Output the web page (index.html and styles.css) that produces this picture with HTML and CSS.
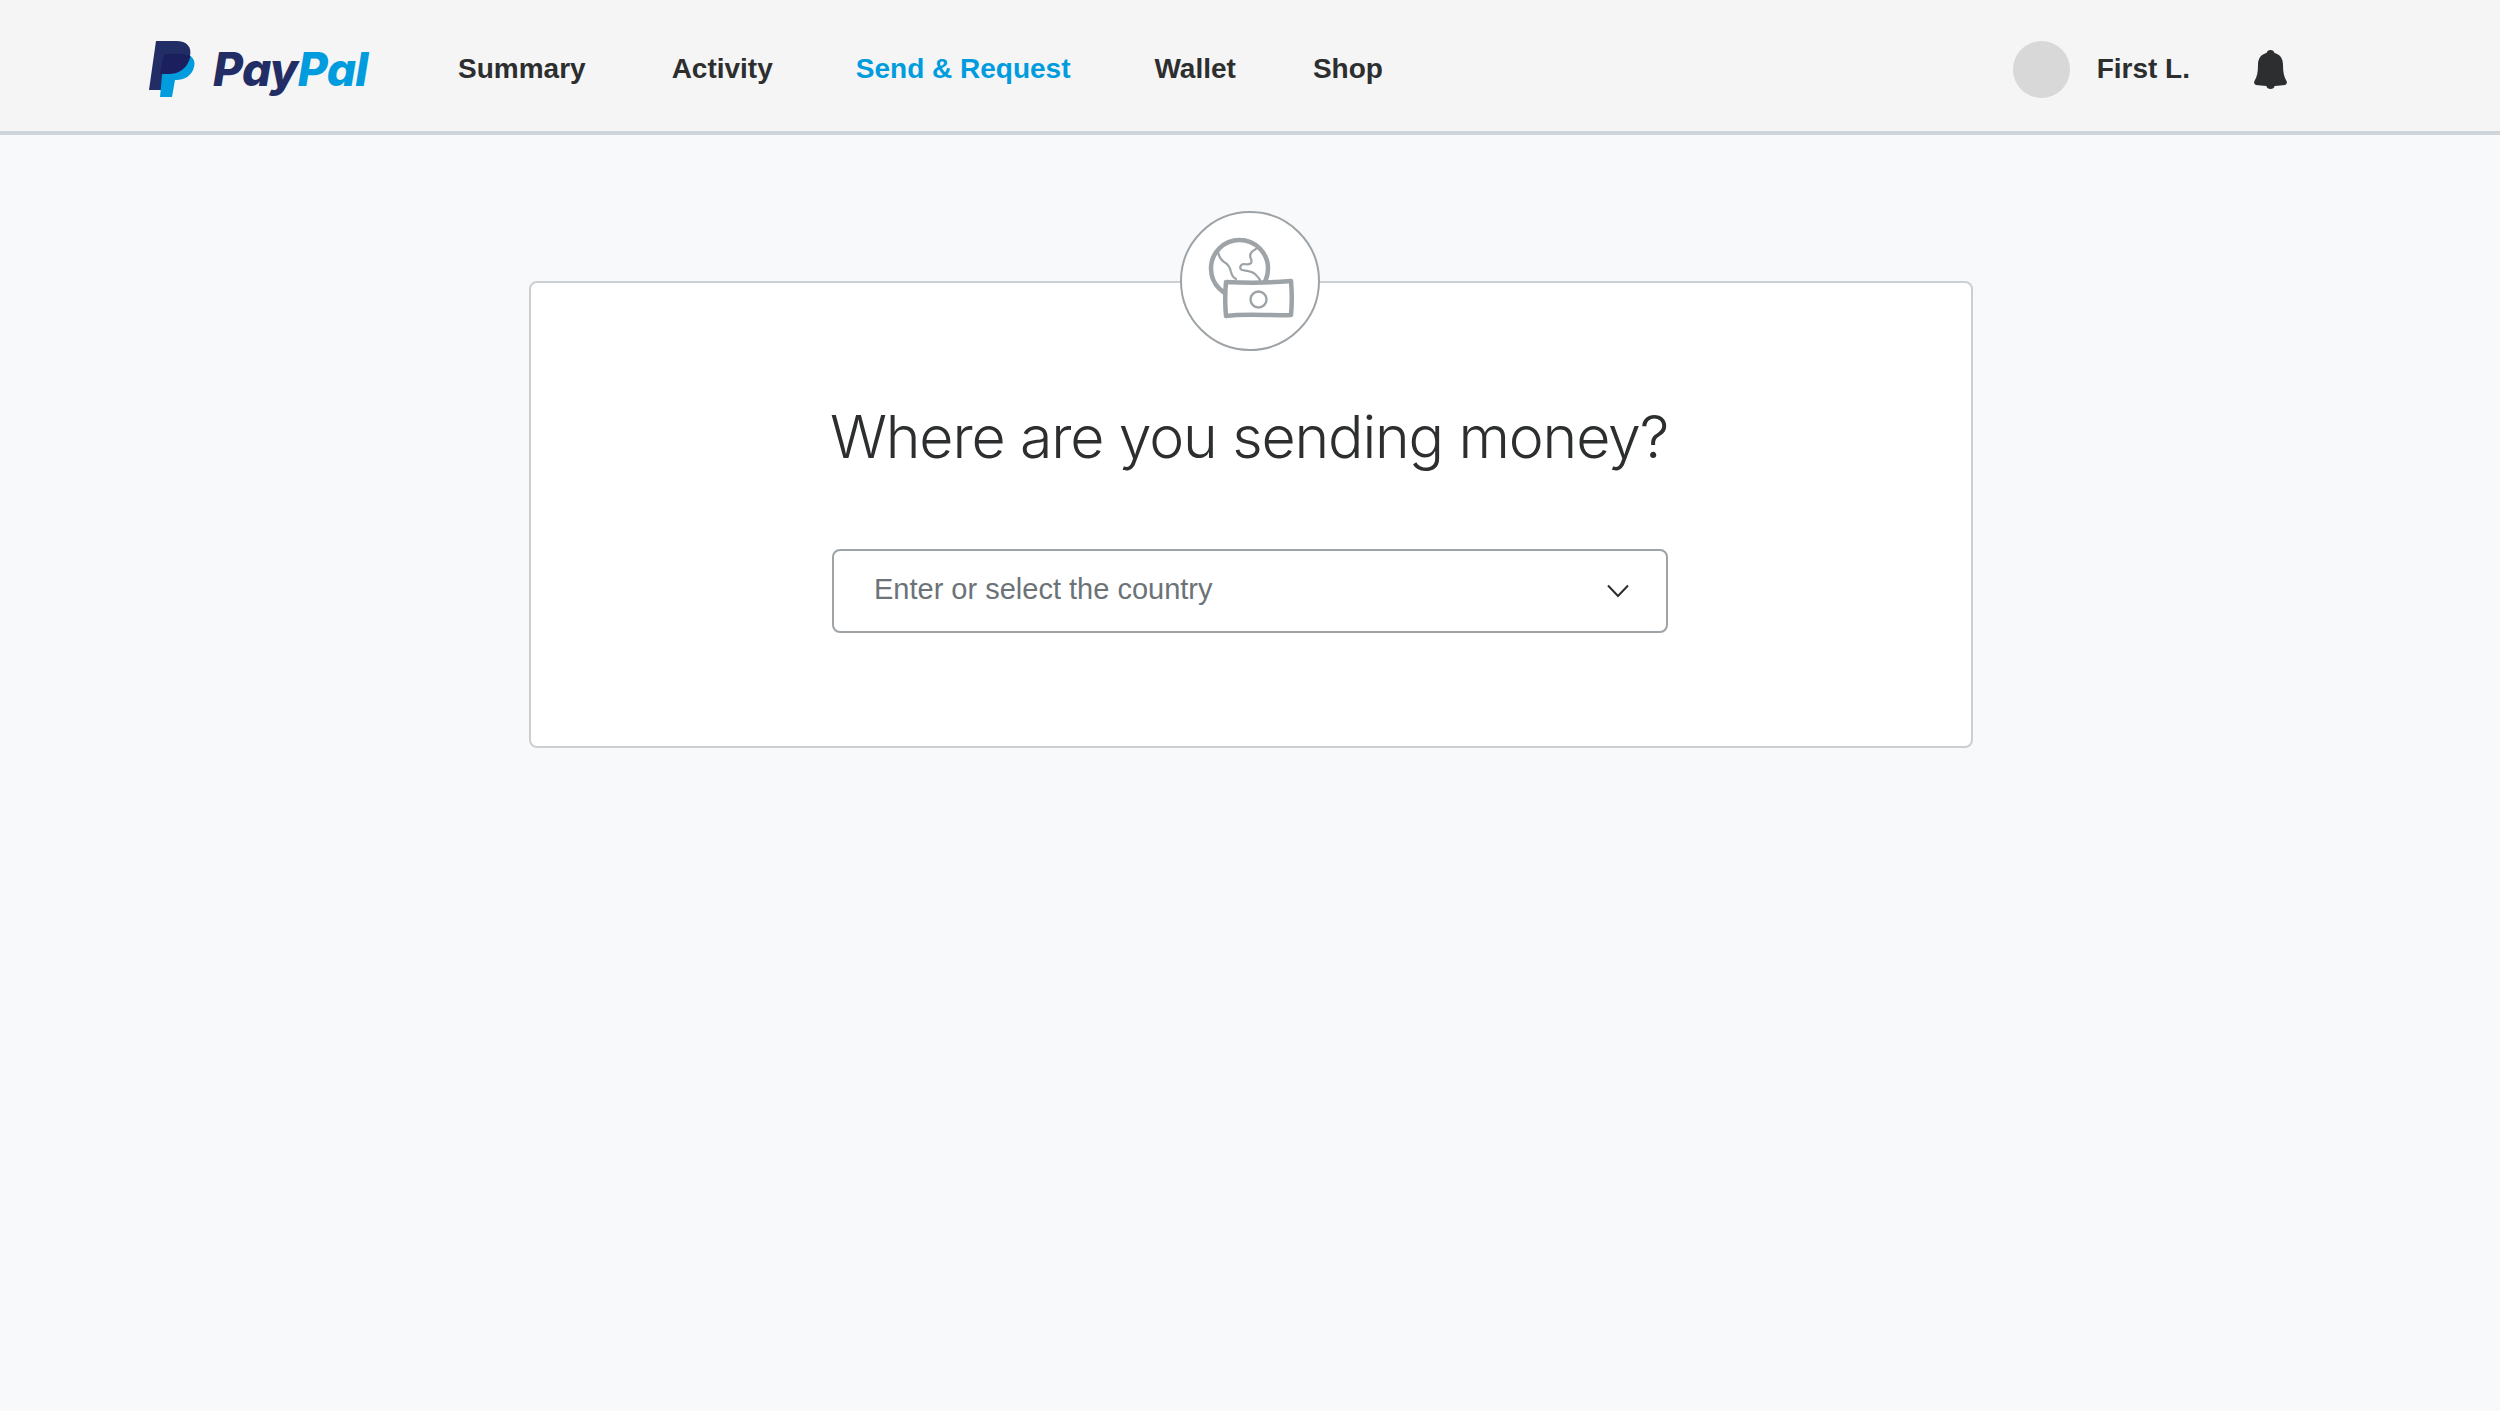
FILE: index.html
```html
<!DOCTYPE html>
<html lang="en">
<head>
	<meta charset="UTF-8">
	<title>PayPal - Send money</title>
	<link rel="stylesheet" href="styles.css">
</head>
<body>
	<header class="topbar">
		<a class="logo" href="#">
			<svg class="logo-mark" width="46" height="56" viewBox="0 0 46 56">
				<path fill="#222d65" d="M7 0H27C38 0 43 6 41 15C39 27 30 33 20 33H15L12 49H0Z"/>
				<path fill="#009cde" d="M15 13H33C43 13 47 19 45 26C43 35 35 39 27 39H26L23 56H11Z"/>
				<path fill="#1b1f5e" d="M15 13H33C37 13 40 13.500 41.500 15C39 27 30 33 20 33H11Z"/>
			</svg>
			<span class="logo-word"><span class="pay">Pay</span><span class="pal">Pal</span></span>
		</a>
		<nav class="nav">
			<a class="nav-link nav-summary" href="#">Summary</a>
			<a class="nav-link nav-activity" href="#">Activity</a>
			<a class="nav-link nav-send active" href="#">Send &amp; Request</a>
			<a class="nav-link nav-wallet" href="#">Wallet</a>
			<a class="nav-link" href="#">Shop</a>
		</nav>
		<div class="user">
			<span class="avatar"></span>
			<span class="user-name">First L.</span>
			<svg class="bell" width="33" height="39" viewBox="0 0 33 39">
				<path fill="#2c2e2f" d="M16.500 0C18.500 0 20 1 20.500 3C26.500 4.500 29 9 29 15C29 22 30 27 32.500 31C33.500 33 32.500 34.500 31 35C21 36.500 12 36.500 2 35C.5 34.500 -.5 33 .5 31C3 27 4 22 4 15C4 9 6.500 4.500 12.500 3C13 1 14.500 0 16.500 0Z"/>
				<path fill="#2c2e2f" d="M12.500 36H20.500C20.500 38 18.500 39 16.500 39C14.500 39 12.500 38 12.500 36Z"/>
			</svg>
		</div>
	</header>

	<main class="page">
		<section class="card">
			<div class="card-icon">
				<svg width="140" height="140" viewBox="0 0 140 140" fill="none" stroke="#9da3a6" stroke-linecap="round" stroke-linejoin="round">
					<circle cx="59.500" cy="57.500" r="28.500" stroke-width="4.500"/>
					<path stroke-width="2.200" d="M38 41C39 46 41 49 44 51C48 53 50 56 51 61C52 65 54 67 56 68"/>
					<path stroke-width="2.200" d="M76 38C70 41 69 44 71 48C73 53 69 54 64 53C60 53 59 58 62 59C67 60 72 60 75 63C77 65 79 67 80 69"/>
					<path fill="#fff" stroke-width="4.500" d="M46 71C67 72 90 72 111 70C112 81 112 93 111 104C90 105 67 102 46 105C45 94 45 82 46 71Z"/>
					<circle cx="78.500" cy="88.500" r="8" stroke-width="2.400"/>
				</svg>
			</div>
			<h1 class="card-title">Where are you sending money?</h1>
			<div class="select">
				<span class="select-text">Enter or select the country</span>
				<svg class="chevron" width="22" height="14" viewBox="0 0 22 14" fill="none" stroke="#2c2e2f" stroke-width="2">
					<path d="M1 1.500L11 12L21 1.500"/>
				</svg>
			</div>
		</section>
	</main>
</body>
</html>
```

FILE: styles.css
```css
*{
	box-sizing: border-box;
}
html, body{
	height: 100%;
}
body{
	margin: 0;
	min-height: 1411px;
	background-color: #f8f9fb;
	color: #2c2e2f;
	font-family: "Liberation Sans", Arial, sans-serif;
}
a{
	text-decoration: none;
	color: inherit;
}

.topbar{
	display: flex;
	align-items: center;
	height: 135px;
	padding: 7px 213px 0 149px;
	background-color: #f5f5f5;
	border-bottom: 4px solid #cfd5d8;
}
.logo{
	display: flex;
	align-items: center;
	gap: 18px;
	width: 309px;
}
.logo-word{
	font-family: Inter, "Liberation Sans", sans-serif;
	font-size: 46px;
	font-weight: 800;
	font-style: italic;
	letter-spacing: -.6px;
	line-height: 1;
}
.pay{
	color: #222d65;
}
.pal{
	color: #009cde;
}

.nav{
	display: flex;
	align-items: center;
}
.nav-link{
	font-size: 28px;
	font-weight: 700;
	color: #2c2e2f;
	white-space: nowrap;
}
.nav-summary{
	margin-right: 86px;
}
.nav-activity{
	margin-right: 83px;
}
.nav-send{
	margin-right: 84px;
}
.nav-wallet{
	margin-right: 77px;
}
.active{
	color: #009cde;
}

.user{
	display: flex;
	align-items: center;
	margin-left: auto;
}
.avatar{
	width: 57px;
	height: 57px;
	border-radius: 50%;
	background-color: #d8d8d8;
}
.user-name{
	margin-left: 27px;
	font-size: 28px;
	font-weight: 700;
}
.bell{
	margin-left: 64px;
}

.page{
	display: flex;
	justify-content: center;
	padding: 146px 0 0 2px;
}
.card{
	position: relative;
	display: flex;
	flex-direction: column;
	align-items: center;
	width: 1444px;
	height: 467px;
	padding: 112px 2px 0 0;
	background-color: #fff;
	border: 2px solid #cccfd1;
	border-radius: 8px;
}
.card-icon{
	position: absolute;
	top: -72px;
	left: 50%;
	width: 140px;
	height: 140px;
	margin-left: -71px;
	background-color: #fff;
	border: 2px solid #9da3a6;
	border-radius: 50%;
}
.card-icon svg{
	display: block;
	margin: -2px;
}
.card-title{
	margin: 0;
	font-family: Inter, "Liberation Sans", sans-serif;
	font-size: 59px;
	font-weight: 300;
	letter-spacing: -1.15px;
	line-height: 84px;
	color: #2c2e2f;
	white-space: nowrap;
	transform: translateX(-1px);
}
.select{
	display: flex;
	align-items: center;
	justify-content: space-between;
	width: 836px;
	height: 84px;
	margin-top: 70px;
	padding: 0 37px 3px 40px;
	border: 2px solid #9da3a6;
	border-radius: 8px;
}
.select-text{
	font-size: 29px;
	color: #6c7378;
}
.chevron{
	margin-top: 3px;
}
```
